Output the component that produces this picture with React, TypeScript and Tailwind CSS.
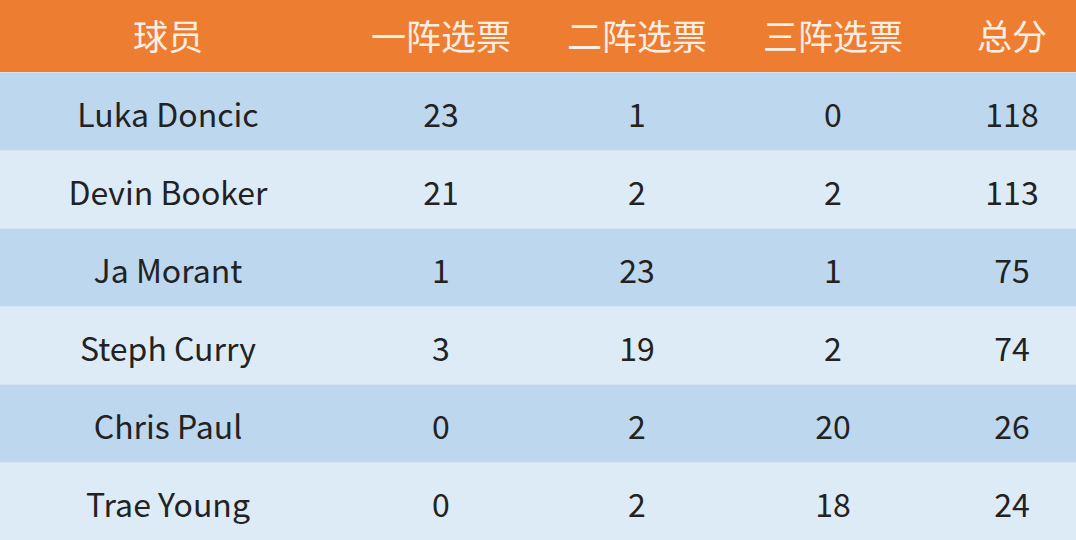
const rows = [
  ['Luka Doncic', '23', '1', '0', '118'],
  ['Devin Booker', '21', '2', '2', '113'],
  ['Ja Morant', '1', '23', '1', '75'],
  ['Steph Curry', '3', '19', '2', '74'],
  ['Chris Paul', '0', '2', '20', '26'],
  ['Trae Young', '0', '2', '18', '24'],
];

const headers = ['球员', '一阵选票', '二阵选票', '三阵选票', '总分'];

export default function App() {
  return (
    <div
      className="w-[1076px] h-[540px] overflow-hidden bg-[#ddebf7]"
      style={{ fontFamily: '"Noto Sans CJK SC", "Noto Sans", sans-serif' }}
    >
      <div className="grid grid-cols-[336px_210px_182px_210px_138px] h-[72px] bg-[#ed7d31] text-[#fdeee4] text-[35px]">
        {headers.map((h, j) => (
          <div key={h} className={'flex items-center justify-center pb-[2px] ' + (j === 4 ? 'pl-[10px]' : '')}>{h}</div>
        ))}
      </div>
      {rows.map((r, i) => (
        <div
          key={r[0]}
          className={
            'grid grid-cols-[336px_210px_182px_210px_138px] h-[78px] border-t border-[#d3e4f4] text-[32px] text-[#222] ' +
            (i % 2 === 0 ? 'bg-[#bdd7ee]' : 'bg-[#ddebf7]')
          }
        >
          {r.map((c, j) => (
            <div key={j} className={'flex items-center justify-center pt-[2px] ' + (j === 4 ? 'pl-[10px]' : '')}>{c}</div>
          ))}
        </div>
      ))}
    </div>
  );
}
